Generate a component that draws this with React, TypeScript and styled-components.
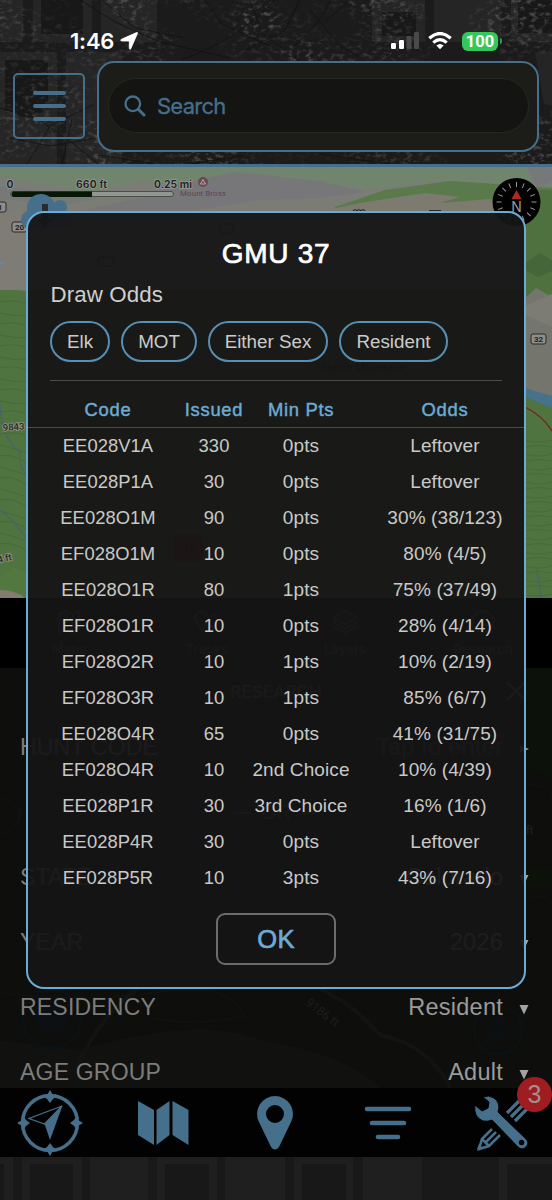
import React from "react";
import styled, { createGlobalStyle } from "styled-components";

const BLUE = "#6cabd3";
const DIM_BLUE = "#456f8b";

const GlobalStyle = createGlobalStyle`
  * { box-sizing: border-box; }
  body { margin: 0; background: #000; font-family: "Liberation Sans", Arial, sans-serif; }
`;

const Screen = styled.main`
  position: relative;
  display: flex;
  flex-direction: column;
  width: 552px;
  height: 1200px;
  overflow: hidden;
  background: #000;
`;

const Header = styled.header`
  position: relative;
  display: flex;
  flex-direction: column;
  height: 167px;
  border-bottom: 3px solid ${DIM_BLUE};
  background: #1b1b1b;
`;

const Backdrop = styled.svg`
  position: absolute;
  inset: 0;
  width: 100%;
  height: 100%;
`;

const StatusBar = styled.div`
  position: relative;
  display: flex;
  justify-content: space-between;
  align-items: center;
  height: 61px;
  padding: 21px 49px 0 70px;
`;

const StatusGroup = styled.div<{ $gap: number }>`
  display: flex;
  align-items: center;
  gap: ${(p) => p.$gap}px;
`;

const Clock = styled.span`
  color: #fff;
  font: 600 22px/26px Inter, sans-serif;
  letter-spacing: -0.2px;
`;

const Battery = styled.span`
  position: relative;
  display: flex;
  align-items: center;
  justify-content: center;
  width: 36px;
  height: 19px;
  margin: 0 5px 0 2px;
  border-radius: 6px;
  background: #34c759;
  color: #fff;
  font: 700 16.5px/19px Roboto, sans-serif;
  letter-spacing: 0;
  &::after {
    content: "";
    position: absolute;
    right: -4px;
    top: 6px;
    width: 2px;
    height: 6px;
    border-radius: 0 2px 2px 0;
    background: #2a9d48;
  }
`;

const HeaderRow = styled.div`
  position: relative;
  display: flex;
  gap: 12px;
  padding-left: 13px;
`;

const MenuButton = styled.button`
  display: flex;
  flex-direction: column;
  align-items: center;
  justify-content: center;
  gap: 8.6px;
  width: 72px;
  height: 66px;
  margin-top: 12px;
  padding: 0;
  border: 2.5px solid ${DIM_BLUE};
  border-radius: 5px;
  background: transparent;
`;

const MenuLine = styled.span`
  width: 33px;
  height: 4px;
  border-radius: 2px;
  background: ${DIM_BLUE};
`;

const SearchFrame = styled.div`
  width: 442px;
  height: 91px;
  padding: 15px 8px 0 9px;
  border: 2px solid ${DIM_BLUE};
  border-radius: 17px;
  background: #1c1c18;
`;

const SearchField = styled.div`
  display: flex;
  align-items: center;
  gap: 11px;
  height: 55px;
  padding-left: 15px;
  border: 1px solid #262623;
  border-radius: 28px;
  background: #141412;
  color: ${DIM_BLUE};
  font: 400 22px/26px Inter, sans-serif;
  letter-spacing: -0.75px;
  -webkit-text-stroke: 0.3px ${DIM_BLUE};
`;

const MapArea = styled.section`
  height: 431px;
  background: #4d713a;
`;

const ToolTabs = styled.nav`
  display: grid;
  grid-template-columns: repeat(4, 1fr);
  height: 70px;
  padding: 12px 0 0;
  background: #000;
`;

const ToolTab = styled.div`
  display: flex;
  flex-direction: column;
  align-items: center;
  gap: 6px;
  color: #44484a;
  font: 600 13px/14px Inter, sans-serif;
`;

const ResearchPanel = styled.section`
  position: relative;
  display: flex;
  flex-direction: column;
  height: 420px;
  overflow: hidden;
  background: #0f100d;
`;

const PanelTitle = styled.h2`
  position: relative;
  display: flex;
  flex: none;
  justify-content: center;
  align-items: center;
  height: 47px;
  margin: 0;
  color: #626262;
  font: 600 17px/20px Inter, sans-serif;
`;

const PanelClose = styled.span`
  position: absolute;
  right: 26px;
  top: 13px;
  display: flex;
`;

const FieldRow = styled.div`
  position: relative;
  display: flex;
  flex: none;
  align-items: center;
  height: 65px;
  padding: 0 22px 0 20px;
`;

const FieldLabel = styled.span`
  flex: 1;
  color: #7d7d7b;
  font-size: 23px;
  letter-spacing: 0.2px;
`;

const FieldValue = styled.span<{ $faint?: boolean }>`
  color: ${(p) => (p.$faint ? "#4b5052" : "#9b9b9a")};
  font-size: 23.5px;
  letter-spacing: 0.25px;
`;

const Caret = styled.svg`
  width: 12px;
  height: 12px;
  margin-left: 15px;
  margin-top: 2px;
  fill: #a2a2a2;
`;

const OrRow = styled.div`
  position: relative;
  display: flex;
  flex: none;
  align-items: center;
  justify-content: center;
  gap: 10px;
  height: 65px;
  color: #4c4c4c;
  font-size: 20px;
  &::before, &::after {
    content: "";
    width: 18px;
    height: 2px;
    background: #4c4c4c;
  }
`;

const BottomNav = styled.nav`
  position: relative;
  display: grid;
  grid-template-columns: 100px 126px 98px 128px 100px;
  height: 69px;
  background: #020202;
`;

const NavItem = styled.div`
  position: relative;
  display: flex;
  align-items: center;
  justify-content: center;
`;

const Badge = styled.span`
  position: absolute;
  right: 0;
  top: -11px;
  display: flex;
  align-items: center;
  justify-content: center;
  width: 35px;
  height: 35px;
  border-radius: 50%;
  background: #9f1d20;
  color: #a2908f;
  font-size: 25px;
`;

const Footer = styled.footer`
  position: relative;
  height: 43px;
  background: #191919;
`;

const Dialog = styled.section`
  position: absolute;
  left: 26px;
  top: 211px;
  display: flex;
  flex-direction: column;
  width: 500px;
  height: 778px;
  border: 2px solid ${BLUE};
  border-radius: 18px;
  background: rgba(22, 21, 22, 0.945);
`;

const DialogTitle = styled.h1`
  margin: 25px 0 0;
  color: #fff;
  font-size: 28px;
  font-weight: 400;
  line-height: 32px;
  letter-spacing: 0.7px;
  text-align: center;
  -webkit-text-stroke: 0.7px #fff;
`;

const Subtitle = styled.h2`
  margin: 12px 0 0 22.5px;
  color: #cfcfcf;
  font-size: 22.3px;
  font-weight: 400;
  line-height: 26px;
  letter-spacing: 0.1px;
`;

const Pills = styled.div`
  display: flex;
  gap: 11px;
  margin: 13px 0 0 22px;
`;

const Pill = styled.span<{ $width: number }>`
  display: flex;
  align-items: center;
  justify-content: center;
  width: ${(p) => p.$width}px;
  height: 41px;
  padding-top: 1px;
  border: 2px solid #5790b4;
  border-radius: 21px;
  color: #cbcbcb;
  font-size: 18.8px;
`;

const Divider = styled.hr`
  width: 452px;
  height: 1px;
  margin: 18px 0 0 22px;
  border: 0;
  background: #4b4b4d;
`;

const TableRow = styled.div<{ $head?: boolean }>`
  display: grid;
  grid-template-columns: 136px 76px 98px 174px;
  align-items: center;
  height: ${(p) => (p.$head ? 47 : 36)}px;
  padding-left: 12px;
  padding-top: ${(p) => (p.$head ? 12 : 0)}px;
  border-bottom: ${(p) => (p.$head ? "1px solid #4b4b4d" : "0")};
  color: ${(p) => (p.$head ? BLUE : "#c9c9c8")};
  font-size: 18.4px;
  letter-spacing: ${(p) => (p.$head ? 0.7 : 0.05)}px;
  -webkit-text-stroke: ${(p) => (p.$head ? `0.45px ${BLUE}` : "0")};
`;

const Cell = styled.span<{ $loose?: boolean }>`
  display: flex;
  justify-content: center;
  white-space: nowrap;
  ${(p) => p.$loose && "font-size: 19px; letter-spacing: 0.1px;"}
  &:last-child { padding-left: 16px; }
`;

const OkButton = styled.button`
  align-self: center;
  width: 120px;
  height: 52px;
  margin-top: 17px;
  border: 2px solid #6c6c6c;
  border-radius: 9px;
  background: transparent;
  color: ${BLUE};
  font: 400 25.5px/30px "Liberation Sans", Arial, sans-serif;
  letter-spacing: 0.3px;
  -webkit-text-stroke: 0.7px ${BLUE};
`;

const odds = [
  ["EE028V1A", "330", "0pts", "Leftover"],
  ["EE028P1A", "30", "0pts", "Leftover"],
  ["EE028O1M", "90", "0pts", "30% (38/123)"],
  ["EF028O1M", "10", "0pts", "80% (4/5)"],
  ["EE028O1R", "80", "1pts", "75% (37/49)"],
  ["EF028O1R", "10", "0pts", "28% (4/14)"],
  ["EF028O2R", "10", "1pts", "10% (2/19)"],
  ["EF028O3R", "10", "1pts", "85% (6/7)"],
  ["EE028O4R", "65", "0pts", "41% (31/75)"],
  ["EF028O4R", "10", "2nd Choice", "10% (4/39)"],
  ["EE028P1R", "30", "3rd Choice", "16% (1/6)"],
  ["EE028P4R", "30", "0pts", "Leftover"],
  ["EF028P5R", "10", "3pts", "43% (7/16)"],
];

const pills = [
  { label: "Elk", width: 60 },
  { label: "MOT", width: 76 },
  { label: "Either Sex", width: 120 },
  { label: "Resident", width: 109 },
];

const ForestBackdrop = () => (
  <Backdrop viewBox="0 0 552 164" preserveAspectRatio="none">
    <defs>
      <filter id="foliage" x="0" y="0" width="100%" height="100%">
        <feTurbulence type="fractalNoise" baseFrequency="0.16 0.24" numOctaves="4" seed="8" />
        <feColorMatrix values="0 0 0 0 0.42  0 0 0 0 0.42  0 0 0 0 0.42  3.2 0 0 0 -1.6" />
      </filter>
      <filter id="clumps" x="0" y="0" width="100%" height="100%">
        <feTurbulence type="fractalNoise" baseFrequency="0.012 0.02" numOctaves="2" seed="21" />
        <feColorMatrix values="0 0 0 0 1  0 0 0 0 1  0 0 0 0 1  3 0 0 0 -1.1" />
      </filter>
      <mask id="clumpMask"><rect width="552" height="164" filter="url(#clumps)" /></mask>
    </defs>
    <rect width="552" height="164" fill="#1b1b1b" />
    <g fill="#252525">
      <path d="M0 0H23V42H0zM33 0H92V42H33zM101 0H157V42H101zM0 52H57V164H0zM66 52H122V164H66zM372 0H425V42H372zM434 0H501V42H434zM511 0H552V42H511z" />
      <path d="M535 52H552V106L544 104z" />
    </g>
    <g fill="#181818">
      <path d="M41 0H83V34H41zM5 60H48V110L26 118L5 110zM382 12H416V36H382zM518 0H552V33H518z" />
    </g>
    <rect width="552" height="164" filter="url(#foliage)" mask="url(#clumpMask)" opacity="0.36" />
    <g fill="none" stroke="#111" strokeWidth="1" opacity="0.75">
      <path d="M80 0L115 22L160 42L230 58M102 0L135 28L185 38M180 60Q235 42 275 0M205 0L222 24L270 46M250 0L262 34L300 60M300 0L285 30L246 50M330 0Q324 20 290 50M310 10L340 46L365 60M350 0L325 22" />
      <path d="M0 108L38 119L75 145L98 164M27 164L50 126L93 105M62 164L72 120M10 138L50 146L96 138M98 155L155 164M190 164L246 155M320 154L390 164" />
    </g>
  </Backdrop>
);

const FooterBackdrop = () => (
  <Backdrop viewBox="0 0 552 43">
    <rect width="552" height="43" fill="#191919" />
    <path fill="#1f1f1f" d="M0 0H13V43H0zM22 0H82V43H22zM90 0H148V43H90zM157 0H217V43H157zM225 0H285V43H225zM294 0H353V43H294zM363 0H422V43H363zM499 0H552V43H499z" />
    <path fill="#181818" d="M0 7H4V43H0zM30 7H73V43H30zM165 7H209V43H165zM302 7H346V43H302zM507 7H552V43H507z" />
  </Backdrop>
);

const Shield = ({ x, y, w, label }: { x: number; y: number; w: number; label: string }) => (
  <g>
    <rect x={x} y={y} width={w} height="10" rx="2" fill="#8d8d89" stroke="#292929" />
    <text x={x + w / 2} y={y + 8} textAnchor="middle" fontSize="8" fontWeight="700" fontFamily="Roboto" fill="#222">{label}</text>
  </g>
);

const MapDrawing = () => (
  <svg width="552" height="431" viewBox="0 167 552 431" style={{ display: "block" }}>
    <rect y="167" width="552" height="431" fill="#50743f" />
    <path d="M0 167H552V211L526 215V290H0z" fill="#7b7c76" />
    <path d="M0 167H552V185L430 181L370 190L310 182L240 177L196 188L145 181L90 193L0 176z" fill="#71856e" />
    <path d="M180 184L235 172L320 181L365 192L318 198L260 200L190 211H80L140 198z" fill="#777779" />
    <path d="M335 207L385 190L450 181L552 188V211H335z" fill="#5b7a4c" />
    <path d="M320 211L366 202L425 193L460 197L440 203L490 199L526 211z" fill="#7d7a70" />
    <path d="M0 186L100 198L60 205L0 199z" fill="#777878" />
    <path d="M526 167L552 167V182L536 187z" fill="#77787a" />
    <path d="M0 211H30V291L0 289z" fill="#7e7c74" />
    <path d="M0 261L6 262L0 265z" fill="#668aa0" />
    <path d="M525 190H552V290L525 300z" fill="#4e713f" />
    <path d="M525 263L540 253L552 260V271L538 277L525 270z" fill="#45663a" />
    <path d="M525 298L536 288L552 297V401L525 390z" fill="#74756c" />
    <path d="M525 306L552 294V327L525 315z" fill="#7c7c74" />
    <path d="M525 388L552 396V408L525 397z" fill="#48718c" />
    <path d="M525 407Q543 416 552 431" fill="none" stroke="#7d211b" strokeWidth="1.3" />
    <g fill="none" stroke="#466738" strokeWidth="0.8">
      {Array.from({ length: 23 }, (_, i) => (
        <path key={i} d={`M0 ${302 + i * 11}q14 ${i % 2 ? 4 : -3} 28 ${i > 12 ? 8 : 2}M524 ${440 + i * 7}q14 ${i % 2 ? -3 : 4} 28 0`} />
      ))}
    </g>
    <path d="M0 405Q2 440 20 452Q17 465 28 476M0 510Q13 520 28 540M537 568L541 598" fill="none" stroke="#47646f" strokeWidth="1.2" />
    <path d="M0 578L13 567L28 574V598H0z" fill="#53783f" />
    <path d="M0 590Q16 590 25 598H0z" fill="#817b70" />
    <g fontFamily="Inter" fontSize="10.500" fontWeight="600" fill="#202020" stroke="#999c97" strokeWidth="1.500" paintOrder="stroke">
      <text x="6.500" y="188">0</text>
      <text x="76" y="188" textLength="31">660 ft</text>
      <text x="154" y="188" textLength="38">0.25 mi</text>
    </g>
    <rect x="10.500" y="191.500" width="163" height="5" rx="2.500" fill="#929592" stroke="#465045" />
    <path d="M13 191.500H92V197H13Q10 194 13 191.500z" fill="#061705" />
    <circle cx="203" cy="182" r="5" fill="#684954" />
    <path d="M200.500 184L203 179.500L205.500 184z" fill="none" stroke="#bdb0b5" strokeWidth="0.900" />
    <text x="180" y="196" textLength="46" fontFamily="Roboto" fontSize="8" fill="#5e4551">Mount Bross</text>
    <Shield x={-6} y={202} w={12} label="1" />
    <Shield x={12} y={222} w={15} label="20" />
    <Shield x={531} y={334} w={15} label="32" />
    <g fill="#456f8b">
      <circle cx="41" cy="208" r="14" /><circle cx="60" cy="207" r="7" />
      <circle cx="31" cy="220" r="10" /><rect x="30" y="210" width="42" height="20" rx="9" />
    </g>
    <path d="M42 204H48V219H53L45 227L37 219H42z" fill="#262c30" />
    <g fill="none" stroke="#26292a">
      <path d="M353 211q2-2.500 4 0q2-2.500 4 0q2-2.500 4 0M429 210.500H441" strokeWidth="1.200" />
      <rect x="98" y="257" width="15" height="9" rx="2" />
      <rect x="220" y="224" width="13" height="9" rx="2" />
    </g>
    <circle cx="516.500" cy="202" r="24" fill="#010101" />
    <g stroke="#999" strokeWidth="1">
      {Array.from({ length: 16 }, (_, i) => (
        <path key={i} d="M516.500 182V187" transform={`rotate(${i * 22.5} 516.500 202)`} />
      ))}
    </g>
    <path d="M516.500 190L521.500 199H511.500z" fill="#a82a23" />
    <text x="516.500" y="212" textAnchor="middle" fontFamily="Inter" fontSize="14" fill="#999">N</text>
    <g fontFamily="Roboto" fontSize="9.500" fontWeight="500" fill="#292a26" stroke="#899181" strokeWidth="1.800" paintOrder="stroke">
      <text transform="translate(3 431) rotate(-4)">9843</text>
      <text transform="translate(-4 564) rotate(-14)">.4 ft</text>
    </g>
    <text x="320" y="371" fontFamily="Roboto" fontSize="11" fontWeight="700" fill="#18201a">Prairie Mountain</text>
    <rect x="173" y="534" width="30" height="28" rx="5" fill="#7b171b" />
    <text x="188" y="553" textAnchor="middle" fontFamily="Inter" fontSize="13" fill="#19090a">37</text>
  </svg>
);

const PanelTerrain = () => (
  <Backdrop viewBox="0 668 552 420">
    <rect y="668" width="552" height="420" fill="#0e0f0c" />
    <path d="M526 668H552V780L526 766zM526 867L552 868V888H526z" fill="#0c120a" />
    <path d="M0 1040L80 1050Q200 1015 260 1040Q350 1055 380 1088H0z" fill="#11110f" />
    <g fill="none" stroke="#131411">
      <path d="M0 798q28 8 16 28M0 835q24-8 20-28M526 785q28-2 26 20M526 900q16-8 26 3M0 993Q90 1003 159 992T245 1016Q200 1027 150 1018M190 1080Q240 1050 280 1065T380 1088" />
      <path d="M137 989Q98 1018 75 1070M320 989Q355 1005 380 1035Q430 1045 450 1088" strokeWidth="4" />
    </g>
    <g fill="none" stroke="#0c1114" strokeWidth="3">
      <circle cx="52" cy="1019" r="29" /><circle cx="498" cy="1030" r="24" />
    </g>
    <g fill="#0c1013"><circle cx="52" cy="1018" r="16" /><circle cx="498" cy="1022" r="6" /><ellipse cx="498" cy="1034" rx="13" ry="6" /></g>
    <text transform="translate(305 1004) rotate(38)" fontFamily="Roboto" fontSize="12" fill="#1d1d1b">9186 ft</text>
    <text x="526" y="834" fontFamily="Roboto" fontSize="11" fill="#242424">ft</text>
  </Backdrop>
);

const DownCaret = () => (
  <Caret viewBox="0 0 12 12"><path d="M1.500 2H10.500L6 11.500z" /></Caret>
);

const tabIcons = [
  "M3 4L9 1L15 4L21 1V18L15 21L9 18L3 21zM9 1V18M15 4V21",
  "M7 19L2 11A6 6 0 1 1 12 11zM11 20Q21 21 16 14T21 4",
  "M12 1L23 7L12 13L1 7zM1 11L12 17L23 11M1 15L12 21L23 15",
  "M12 1A10 10 0 1 1 12 21A10 10 0 1 1 12 1M12 6V12L16 15",
];

const Field = ({ label, value, faint, side }: { label: string; value: string; faint?: boolean; side?: boolean }) => (
  <FieldRow>
    <FieldLabel>{label}</FieldLabel>
    <FieldValue $faint={faint}>{value}</FieldValue>
    {side ? <Caret viewBox="0 0 12 12"><path d="M2 2.500L11 6L2 9.500z" /></Caret> : <DownCaret />}
  </FieldRow>
);

export default function App() {
  return (
    <>
      <GlobalStyle />
      <Screen>
        <Header>
          <ForestBackdrop />
          <StatusBar>
            <StatusGroup $gap={6}>
              <Clock>1:46</Clock>
              <svg width="18" height="18" viewBox="0 0 18 18"><path d="M16.500 0.600Q18 0 17.300 1.700L10.800 16.700Q9.700 18.200 9.300 16.300V9H1.800Q-.3 8.400 1.400 7.300z" fill="#fff" stroke="#fff" strokeWidth="0.800" /></svg>
            </StatusGroup>
            <StatusGroup $gap={8}>
              <svg width="30" height="20" viewBox="0 0 30 20">
                <rect x="1" y="12" width="5" height="6" rx="1.300" fill="#fff" />
                <rect x="9" y="9" width="5" height="9" rx="1.300" fill="#fff" />
                <rect x="16.500" y="5" width="5" height="13" rx="1.300" fill="#4a4a4a" />
                <rect x="24" y="1" width="5" height="17" rx="1.300" fill="#4a4a4a" />
              </svg>
              <svg width="24" height="18" viewBox="0 0 24 18">
                <g fill="none" stroke="#fff" strokeWidth="3.200">
                  <path d="M1.300 6.200Q12 -3.200 22.700 6.200" /><path d="M5.300 10.600Q12 4.600 18.700 10.600" />
                </g>
                <path d="M8.300 13.500Q12 10.500 15.700 13.500L12 17.300z" fill="#fff" />
              </svg>
              <Battery>100</Battery>
            </StatusGroup>
          </StatusBar>
          <HeaderRow>
            <MenuButton aria-label="Menu"><MenuLine /><MenuLine /><MenuLine /></MenuButton>
            <SearchFrame>
              <SearchField>
                <svg width="22" height="22" viewBox="0 0 22 22" fill="none" stroke={DIM_BLUE} strokeLinecap="round">
                  <circle cx="8.800" cy="8.800" r="7.300" strokeWidth="2.300" /><path d="M14.500 14.500L20 20" strokeWidth="3" />
                </svg>
                Search
              </SearchField>
            </SearchFrame>
          </HeaderRow>
        </Header>

        <MapArea><MapDrawing /></MapArea>

        <ToolTabs>
          {["Maps", "Tracks", "Layers", "Research"].map((label, i) => (
            <ToolTab key={label}>
              <svg width="26" height="26" viewBox="0 0 24 24" fill="none" stroke="#404648" strokeWidth="2"><path d={tabIcons[i]} /></svg>
              {label}
            </ToolTab>
          ))}
        </ToolTabs>

        <ResearchPanel>
          <PanelTerrain />
          <PanelTitle>
            RESEARCH
            <PanelClose><svg width="20" height="20" viewBox="0 0 20 20" stroke="#777" strokeWidth="2"><path d="M1 1L19 19M19 1L1 19" /></svg></PanelClose>
          </PanelTitle>
          <Field label="HUNT CODE" value="Tap to enter" faint side />
          <OrRow>OR</OrRow>
          <Field label="STATE" value="Colorado" />
          <Field label="YEAR" value="2026" />
          <Field label="RESIDENCY" value="Resident" />
          <Field label="AGE GROUP" value="Adult" />
        </ResearchPanel>

        <BottomNav>
          <NavItem>
            <svg width="66" height="66" viewBox="0 0 66 66" fill={DIM_BLUE}>
              <circle cx="33" cy="33" r="27.500" fill="none" stroke={DIM_BLUE} strokeWidth="3.500" />
              <path d="M33 0L36 5L39 7L36 9L33 13L30 9L27 7L30 5zM33 66L36 61L39 59L36 57L33 53L30 57L27 59L30 61zM0 33L5 30L7 27L9 30L13 33L9 36L7 39L5 36zM66 33L61 30L59 27L57 30L53 33L57 36L59 39L61 36z" />
              <path d="M45.500 15.500L33 50L27.500 34z" />
              <path d="M45 16L12 28.500L27.500 34z" fill="none" stroke={DIM_BLUE} strokeWidth="1.300" />
            </svg>
          </NavItem>
          <NavItem>
            <svg width="52" height="44" viewBox="0 0 52 44" fill={DIM_BLUE}><path d="M1 0L17 9V44L1 34zM19.500 9L32.500 0V34L19.500 44zM35.500 0L51.500 9V44L35.500 34z" /></svg>
          </NavItem>
          <NavItem>
            <svg width="38" height="56" viewBox="0 0 38 56"><path fill={DIM_BLUE} fillRule="evenodd" d="M19 1A18 18 0 0 1 35.500 26L23 52Q19 57 15 52L2.500 26A18 18 0 0 1 19 1M19 10A9 9 0 1 0 19 28A9 9 0 1 0 19 10" /></svg>
          </NavItem>
          <NavItem>
            <svg width="48" height="34" viewBox="0 0 48 34" stroke={DIM_BLUE} strokeWidth="4.600" strokeLinecap="round"><path d="M3 3H45M8 17H40M14 31H34" /></svg>
          </NavItem>
          <NavItem>
            <svg width="56" height="56" viewBox="0 0 56 56" style={{ overflow: "visible" }}>
              <g fill="none" stroke={DIM_BLUE} strokeWidth="2.600">
                <path d="M18 34L8 44L5 54L15 51L26 40M22 37L12 47M8 44L15 51" />
                <path d="M33 18L45 6M37 22L50 9M41 26L55 12" strokeWidth="3.300" />
              </g>
              <path d="M3 54L5 49L9 53z" fill={DIM_BLUE} />
              <path d="M9 2L15 7L14 13L8 16L1 10Q-1 22 9 26Q14 27 18 25L44 52Q48 56 52 52Q56 48 52 44L24 17Q27 8 20 3Q15-.5 9 2z" fill={DIM_BLUE} stroke="#020202" strokeWidth="1" />
              <circle cx="47.500" cy="47.500" r="2.700" fill="#020202" />
            </svg>
            <Badge>3</Badge>
          </NavItem>
        </BottomNav>

        <Footer><FooterBackdrop /></Footer>

        <Dialog role="dialog">
          <DialogTitle>GMU 37</DialogTitle>
          <Subtitle>Draw Odds</Subtitle>
          <Pills>
            {pills.map((p) => <Pill key={p.label} $width={p.width}>{p.label}</Pill>)}
          </Pills>
          <Divider />
          <TableRow $head>
            <Cell>Code</Cell><Cell>Issued</Cell><Cell>Min Pts</Cell><Cell>Odds</Cell>
          </TableRow>
          {odds.map((row) => (
            <TableRow key={row[0]}>
              {row.map((value, i) => <Cell key={i} $loose={i > 0 && i !== 1}>{value}</Cell>)}
            </TableRow>
          ))}
          <OkButton>OK</OkButton>
        </Dialog>
      </Screen>
    </>
  );
}
